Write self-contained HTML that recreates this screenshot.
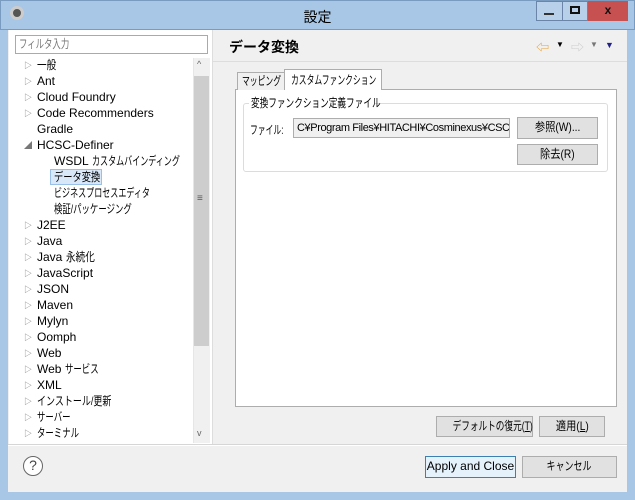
<!DOCTYPE html>
<html><head><meta charset="utf-8"><style>
*{box-sizing:border-box;margin:0;padding:0}
body{width:635px;height:500px;position:relative;background:#a8c6e6;font-family:"Liberation Sans","Noto Sans CJK JP",sans-serif;font-size:12px;color:#000;overflow:hidden}
.a{position:absolute;white-space:nowrap}
.s{display:inline-block;transform:scaleX(.7);transform-origin:0 50%;white-space:nowrap}
.t{display:inline-block;transform:scaleX(.8);transform-origin:0 50%;white-space:nowrap}
.c{display:inline-block;transform:scaleX(.72);transform-origin:50% 50%;white-space:nowrap}
.btn{position:absolute;background:#e1e1e1;border:1px solid #adadad;text-align:center;font-size:12px;line-height:19px;white-space:nowrap}
.row{position:absolute;left:0;height:16px;line-height:16px;white-space:nowrap}
.tri{position:absolute;left:24px;font-size:8px;color:#777}
</style></head><body>
<div class="a" style="left:0;top:0;width:635px;height:30px;background:#a8c6e6;border:1px solid #7a9bc0"></div>
<div class="a" style="left:10px;top:6px;width:14px;height:14px;border-radius:50%;background:#555;border:3px solid #ccc"></div>
<div class="a" style="left:0;top:7px;width:635px;text-align:center;font-size:14px">設定</div>
<div class="a" style="left:536px;top:1px;width:27px;height:20px;border:1px solid #6a85a8;background:#b8d0ea"></div>
<div class="a" style="left:544px;top:13px;width:10px;height:2px;background:#333"></div>
<div class="a" style="left:562px;top:1px;width:26px;height:20px;border:1px solid #6a85a8;background:#b8d0ea"></div>
<div class="a" style="left:570px;top:6px;width:10px;height:8px;border:2px solid #111"></div>
<div class="a" style="left:588px;top:1px;width:40px;height:20px;background:#c75050;color:#111;text-align:center;font-weight:bold;line-height:19px">x</div>

<div class="a" style="left:8px;top:30px;width:619px;height:462px;background:#f0f0f0"></div>
<div class="a" style="left:9px;top:30px;width:203px;height:414px;background:#fff"></div>
<div class="a" style="left:15px;top:35px;width:193px;height:19px;border:1px solid #aaa;background:#fff;color:#777;padding-left:3px;line-height:17px"><span class="s">フィルタ入力</span></div>
<div class="a" style="left:193px;top:58px;width:17px;height:385px;background:#f0f0f0;border-left:1px solid #e6e6e6"></div>
<div class="a" style="left:194px;top:76px;width:15px;height:270px;background:#cdcdcd"></div>
<div class="a" style="left:197px;top:59px;font-size:9px;color:#666">^</div>
<div class="a" style="left:197px;top:428px;font-size:9px;color:#666">v</div>
<div class="a" style="left:197px;top:193px;font-size:10px;color:#555">≡</div>
<div class="a" style="left:212px;top:30px;width:1px;height:414px;background:#ddd"></div>

<div class="a" style="left:0;top:57px;width:193px;height:386px;overflow:hidden">
<div class="row" style="top:0"><span class="tri" style="top:1px">▷</span><span class="a" style="left:37px"><span class="t">一般</span></span></div>
<div class="row" style="top:16px"><span class="tri" style="top:1px">▷</span><span class="a" style="left:37px">Ant</span></div>
<div class="row" style="top:32px"><span class="tri" style="top:1px">▷</span><span class="a" style="left:37px">Cloud Foundry</span></div>
<div class="row" style="top:48px"><span class="tri" style="top:1px">▷</span><span class="a" style="left:37px">Code Recommenders</span></div>
<div class="row" style="top:64px"><span class="a" style="left:37px">Gradle</span></div>
<div class="row" style="top:80px"><span class="tri" style="top:1px">◢</span><span class="a" style="left:37px">HCSC-Definer</span></div>
<div class="row" style="top:96px"><span class="a" style="left:54px">WSDL <span class="s" style="transform:scaleX(.67)">カスタムバインディング</span></span></div>
<div class="row" style="top:112px"><span class="a" style="left:50px;top:0;width:52px;height:16px;background:#d9e8f8;border:1px solid #99c0e8;padding-left:3px;line-height:14px"><span class="s" style="transform:scaleX(.77)">データ変換</span></span></div>
<div class="row" style="top:128px"><span class="a" style="left:54px"><span class="s" style="transform:scaleX(.67)">ビジネスプロセスエディタ</span></span></div>
<div class="row" style="top:144px"><span class="a" style="left:54px"><span class="s">検証/パッケージング</span></span></div>
<div class="row" style="top:160px"><span class="tri" style="top:1px">▷</span><span class="a" style="left:37px">J2EE</span></div>
<div class="row" style="top:176px"><span class="tri" style="top:1px">▷</span><span class="a" style="left:37px">Java</span></div>
<div class="row" style="top:192px"><span class="tri" style="top:1px">▷</span><span class="a" style="left:37px">Java <span class="t">永続化</span></span></div>
<div class="row" style="top:208px"><span class="tri" style="top:1px">▷</span><span class="a" style="left:37px">JavaScript</span></div>
<div class="row" style="top:224px"><span class="tri" style="top:1px">▷</span><span class="a" style="left:37px">JSON</span></div>
<div class="row" style="top:240px"><span class="tri" style="top:1px">▷</span><span class="a" style="left:37px">Maven</span></div>
<div class="row" style="top:256px"><span class="tri" style="top:1px">▷</span><span class="a" style="left:37px">Mylyn</span></div>
<div class="row" style="top:272px"><span class="tri" style="top:1px">▷</span><span class="a" style="left:37px">Oomph</span></div>
<div class="row" style="top:288px"><span class="tri" style="top:1px">▷</span><span class="a" style="left:37px">Web</span></div>
<div class="row" style="top:304px"><span class="tri" style="top:1px">▷</span><span class="a" style="left:37px">Web <span class="s">サービス</span></span></div>
<div class="row" style="top:320px"><span class="tri" style="top:1px">▷</span><span class="a" style="left:37px">XML</span></div>
<div class="row" style="top:336px"><span class="tri" style="top:1px">▷</span><span class="a" style="left:37px"><span class="s" style="transform:scaleX(.75)">インストール/更新</span></span></div>
<div class="row" style="top:352px"><span class="tri" style="top:1px">▷</span><span class="a" style="left:37px"><span class="s">サーバー</span></span></div>
<div class="row" style="top:368px"><span class="tri" style="top:1px">▷</span><span class="a" style="left:37px"><span class="s">ターミナル</span></span></div>
</div>

<div class="a" style="left:213px;top:61px;width:414px;height:1px;background:#ddd"></div>
<div class="a" style="left:229px;top:37px;font-size:14px;font-weight:bold">データ変換</div>
<div class="a" style="left:536px;top:37px;color:#e8a030;font-size:13px">⇦</div>
<div class="a" style="left:556px;top:40px;font-size:8px">▼</div>
<div class="a" style="left:571px;top:37px;color:#ccc;font-size:13px">⇨</div>
<div class="a" style="left:590px;top:40px;font-size:8px;color:#777">▼</div>
<div class="a" style="left:605px;top:40px;font-size:9px;color:#228">▼</div>

<div class="a" style="left:235px;top:89px;width:382px;height:318px;background:#fff;border:1px solid #adadad"></div>
<div class="a" style="left:237px;top:72px;width:48px;height:18px;background:#f0f0f0;border:1px solid #adadad;border-bottom:none;line-height:17px;padding-left:4px;overflow:hidden"><span class="s" style="transform:scaleX(.65)">マッピング</span></div>
<div class="a" style="left:284px;top:69px;width:98px;height:21px;background:#fff;border:1px solid #adadad;border-bottom:none;line-height:20px;padding-left:6px;overflow:hidden"><span class="s" style="transform:scaleX(.65)">カスタムファンクション</span></div>
<div class="a" style="left:243px;top:103px;width:365px;height:69px;border:1px solid #dcdcdc;border-radius:3px"></div>
<div class="a" style="left:249px;top:95px;width:126px;background:#fff;padding:0 2px;line-height:16px"><span class="s" style="transform:scaleX(.72)">変換ファンクション定義ファイル</span></div>
<div class="a" style="left:250px;top:121px"><span class="s" style="transform:scaleX(.65)">ファイル:</span></div>
<div class="a" style="left:293px;top:118px;width:217px;height:20px;background:#f0f0f0;border:1px solid #adadad;font-size:11px;line-height:18px;padding-left:3px;overflow:hidden;letter-spacing:-0.4px">C¥Program Files¥HITACHI¥Cosminexus¥CSC</div>
<div class="btn" style="left:517px;top:117px;width:81px;height:22px"><span class="c" style="transform:scaleX(.85)">参照(W)...</span></div>
<div class="btn" style="left:517px;top:144px;width:81px;height:21px"><span class="c" style="transform:scaleX(.85)">除去(R)</span></div>

<div class="btn" style="left:436px;top:416px;width:97px;height:21px"><span class="c">デフォルトの復元(<u>T</u>)</span></div>
<div class="btn" style="left:539px;top:416px;width:66px;height:21px"><span class="c" style="transform:scaleX(.85)">適用(<u>L</u>)</span></div>
<div class="a" style="left:8px;top:444px;width:619px;height:1px;background:#d6d6d6"></div>
<div class="a" style="left:8px;top:445px;width:619px;height:1px;background:#fff"></div>
<div class="a" style="left:23px;top:456px;width:20px;height:20px;border-radius:50%;border:1.5px solid #666;background:#fff;text-align:center;line-height:17px;font-size:14px;color:#444">?</div>
<div class="btn" style="left:425px;top:456px;width:91px;height:22px;border-color:#3c7fb1;background:#e5f1fb">Apply and Close</div>
<div class="btn" style="left:522px;top:456px;width:95px;height:22px"><span class="c" style="transform:scaleX(.75)">キャンセル</span></div>
</body></html>
